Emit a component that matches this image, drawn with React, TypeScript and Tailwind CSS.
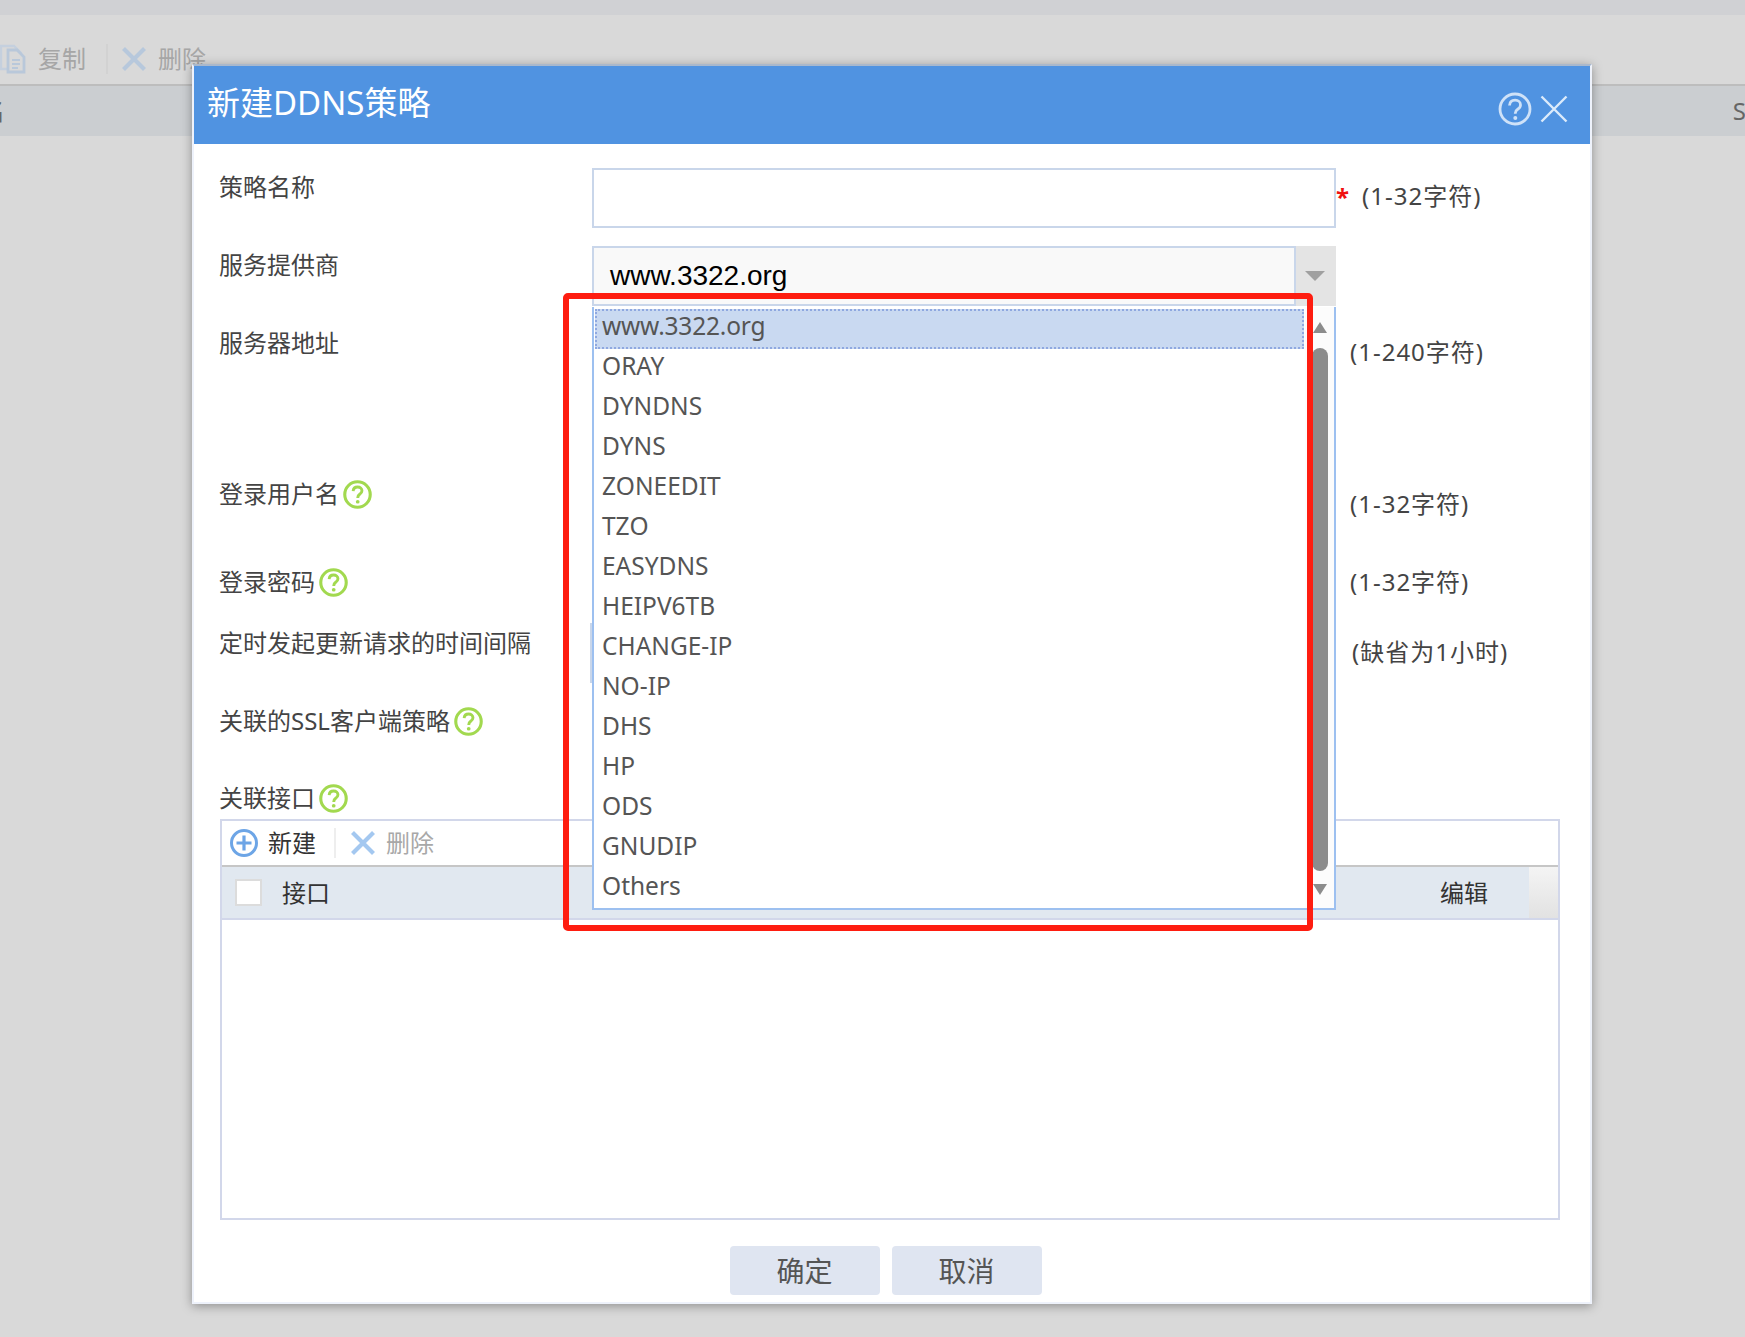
import React from 'react';

const FONT = 'font-["Noto_Sans","Noto_Sans_CJK_SC",sans-serif]';

const options = ['www.3322.org', 'ORAY', 'DYNDNS', 'DYNS', 'ZONEEDIT', 'TZO', 'EASYDNS', 'HEIPV6TB', 'CHANGE-IP', 'NO-IP', 'DHS', 'HP', 'ODS', 'GNUDIP', 'Others'];

const GreenHelp = () => (
  <svg width="29" height="29" viewBox="0 0 28 28" fill="none" className="ml-[4px] shrink-0">
    <circle cx="14" cy="14" r="12.3" stroke="#a2d94f" strokeWidth="3" />
    <path d="M9.8 10.8c.2-2.6 2-4 4.3-4 2.4 0 4.2 1.5 4.2 3.6 0 1.6-.9 2.5-2.2 3.4-1.2.8-1.8 1.5-1.8 3v.6" stroke="#a2d94f" strokeWidth="2.8" />
    <circle cx="14.2" cy="21" r="1.8" fill="#a2d94f" />
  </svg>
);

const CrossIcon = ({ color }: { color: string }) => (
  <svg width="26" height="26" viewBox="0 0 26 26" fill="none">
    <path d="M2.5 2.5l21 21M23.5 2.5l-21 21" stroke={color} strokeWidth="4.2" />
  </svg>
);

const Label = ({ children, className }: any) => (
  <div className={`flex items-center h-[38px] w-[373px] shrink-0 text-[24px] text-[#444] ${className}`}>{children}</div>
);

const Hint = ({ children, className }: any) => (
  <div className={`h-[38px] leading-[38px] text-[24px] tracking-[1px] text-[#444] whitespace-nowrap ${className}`}>{children}</div>
);

export default function App() {
  return (
    <div className={`relative w-[1745px] h-[1337px] overflow-hidden bg-[#d9d9d9] ${FONT}`}>
      {/* page behind the dialog */}
      <div className="h-[15px] bg-[#d0d1d4]" />
      <div className="h-[69px] flex items-center pt-[18px] text-[24px] text-[#a6a6a6]">
        <svg width="28" height="30" viewBox="0 0 28 30" fill="none" className="shrink-0">
          <path d="M1 2h13l7 7v16H1z" stroke="#c5d0de" strokeWidth="2.4" />
          <path d="M8 6h9l7 7v15H8z" fill="#d9d9d9" stroke="#b9c8da" strokeWidth="2.8" />
          <path d="M12 16h8M12 20h8M12 24h6" stroke="#b9c8da" strokeWidth="2" />
        </svg>
        <span className="ml-[10px]">复制</span>
        <div className="ml-[20px] w-[2px] h-[30px] bg-[#d2d2d2]" />
        <div className="ml-[13px]"><CrossIcon color="#b7c8dc" /></div>
        <span className="ml-[11px]">删除</span>
      </div>
      <div className="h-[2px] bg-[#bdbdbd]" />
      <div className="h-[50px] flex items-center justify-between bg-[#cbced1] text-[24px] text-[#666]">
        <span className="-ml-[19px]">名</span>
        <span className="-mr-[1px]">S</span>
      </div>

      {/* dialog */}
      <div className="absolute left-[192px] top-[64px] w-[1400px] h-[1240px] flex flex-col bg-white border-2 border-[#eef2fb] border-t-[#a9b8cc] shadow-[0_2px_10px_rgba(0,0,0,0.35)]">
        <div className="h-[78px] shrink-0 flex items-center bg-[#5093e1] text-white">
          <span className="ml-[13px] -mt-[6px] text-[33px] leading-none">新建DDNS策略</span>
          <svg width="34" height="34" viewBox="0 0 34 34" fill="none" className="ml-auto mt-[8px]">
            <circle cx="17" cy="17" r="15" stroke="#cfe2f8" strokeWidth="2.8" />
            <path d="M11.5 13.5c.2-3.4 2.6-5.3 5.6-5.3 3.1 0 5.4 1.9 5.4 4.7 0 2-1.1 3.2-2.8 4.3-1.6 1-2.4 2-2.4 4v.6" stroke="#cfe2f8" strokeWidth="2.8" />
            <circle cx="17.3" cy="26" r="2" fill="#cfe2f8" />
          </svg>
          <svg width="28" height="28" viewBox="0 0 28 28" fill="none" className="ml-[8px] mr-[22px] mt-[8px]">
            <path d="M1.5 1.5l25 25M26.5 1.5l-25 25" stroke="#dcebfb" strokeWidth="2.4" />
          </svg>
        </div>

        <div className="flex-1 flex flex-col pl-[25px] pr-[30px] pt-[24px]">
          <div className="flex h-[78px] shrink-0">
            <Label className="">策略名称</Label>
            <div className="w-[744px] h-[60px] shrink-0 bg-white border-2 border-[#c9d6ea]" />
            <span className="ml-0 mt-[10px] text-[24px] leading-[38px] font-bold text-[#f01010]">*</span>
            <Hint className="ml-[13px] mt-[9px]">(1-32字符)</Hint>
          </div>
          <div className="flex h-[70px] shrink-0">
            <Label className="">服务提供商</Label>
            <div className="flex w-[744px] h-[60px] shrink-0">
              <div className="flex-1 flex items-center pl-[16px] bg-[#f9f9f9] border-2 border-[#c9d6ea] font-['Liberation_Sans',sans-serif] text-[28px] text-black">www.3322.org</div>
              <div className="w-[40px] flex items-center justify-center pr-[3px] bg-[#e4e4e4]">
                <div className="w-0 h-0 border-x-[10px] border-x-transparent border-t-[10px] border-t-[#a0a0a0]" />
              </div>
            </div>
          </div>
          <div className="flex h-[152px] shrink-0">
            <Label className="mt-[8px]">服务器地址</Label>
            <div className="w-[744px] shrink-0" />
            <Hint className="ml-[14px] mt-[17px]">(1-240字符)</Hint>
          </div>
          <div className="flex h-[88px] shrink-0">
            <Label className="mt-[7px]">登录用户名<GreenHelp /></Label>
            <div className="w-[744px] shrink-0" />
            <Hint className="ml-[14px] mt-[17px]">(1-32字符)</Hint>
          </div>
          <div className="flex h-[63px] shrink-0">
            <Label className="mt-[7px]">登录密码<GreenHelp /></Label>
            <div className="w-[744px] shrink-0" />
            <Hint className="ml-[14px] mt-[7px]">(1-32字符)</Hint>
          </div>
          <div className="flex h-[78px] shrink-0">
            <Label className="mt-[5px]">定时发起更新请求的时间间隔</Label>
            <div className="-ml-[2px] w-[744px] h-[60px] mt-[4px] shrink-0 border-l-2 border-[#c9d6ea]" />
            <Hint className="ml-[18px] mt-[14px]">(缺省为1小时)</Hint>
          </div>
          <div className="flex h-[79px] shrink-0">
            <Label className="mt-[5px]">关联的SSL客户端策略<GreenHelp /></Label>
          </div>
          <div className="flex h-[43px] shrink-0">
            <Label className="mt-[3px]">关联接口<GreenHelp /></Label>
          </div>

          {/* interface table */}
          <div className="flex flex-col h-[401px] shrink-0 ml-[1px] border-2 border-[#d2d7ea] text-[24px]">
            <div className="flex items-center h-[44px] shrink-0">
              <svg width="30" height="30" viewBox="0 0 30 30" fill="none" className="ml-[7px]">
                <circle cx="15" cy="15" r="12.5" stroke="#6da5e6" strokeWidth="3" />
                <path d="M15 7.5v15M7.5 15h15" stroke="#6da5e6" strokeWidth="3.2" />
              </svg>
              <span className="ml-[9px] text-[#333]">新建</span>
              <div className="ml-[18px] w-[2px] h-[30px] bg-[#eeeeee]" />
              <div className="ml-[14px]"><CrossIcon color="#a4c8f0" /></div>
              <span className="ml-[10px] text-[#a8a8a8]">删除</span>
            </div>
            <div className="flex items-center h-[55px] shrink-0 bg-[#e1e8f0] border-t-2 border-b-2 border-t-[#c6c6c6] border-b-[#d2d7ea]">
              <div className="ml-[13px] w-[27px] h-[27px] bg-white border-2 border-[#dcdcdc]" />
              <span className="ml-[20px] text-[#333]">接口</span>
              <span className="ml-auto mr-[41px] text-[#333]">编辑</span>
              <div className="w-[29px] h-full bg-gradient-to-b from-[#f4f4f4] to-[#e2e2e2]" />
            </div>
          </div>

          <div className="flex justify-center gap-[12px] mt-[26px] -ml-[8px]">
            <button className="w-[150px] h-[49px] rounded-[4px] bg-[#dfe5f1] text-[28px] text-[#555]">确定</button>
            <button className="w-[150px] h-[49px] rounded-[4px] bg-[#dfe5f1] text-[28px] text-[#555]">取消</button>
          </div>
        </div>
      </div>

      {/* open select list */}
      <div className="absolute left-[592px] top-[307px] w-[744px] h-[603px] flex bg-white border-2 border-[#9dc0f0] border-t-0">
        <div className="flex-1 flex flex-col pt-[2px] pl-[1px]">
          {options.map((opt, i) => (
            <div
              key={opt}
              className={`h-[40px] shrink-0 flex items-center pb-[5px] w-[709px] text-[24.5px] text-[#555] ${i === 0 ? 'pl-[5px] bg-[#c9d9f1] border-2 border-dotted border-[#8fa8e0] tracking-[-0.2px]' : 'pl-[7px]'}`}
            >
              {opt}
            </div>
          ))}
        </div>
        <div className="relative w-[29px] shrink-0 bg-[#fcfcfc]">
          <div className="absolute left-[8px] top-[15px] w-0 h-0 border-x-[7px] border-x-transparent border-b-[11px] border-b-[#8c8c8c]" />
          <div className="absolute left-[7px] top-[41px] w-[16px] h-[523px] rounded-[8px] bg-[#8c8c8c]" />
          <div className="absolute left-[8px] top-[577px] w-0 h-0 border-x-[7px] border-x-transparent border-t-[11px] border-t-[#8c8c8c]" />
        </div>
      </div>

      {/* red annotation box */}
      <div className="absolute left-[563px] top-[293px] w-[750px] h-[638px] border-[6px] border-[#fe1d10] rounded-[5px]" />
    </div>
  );
}
